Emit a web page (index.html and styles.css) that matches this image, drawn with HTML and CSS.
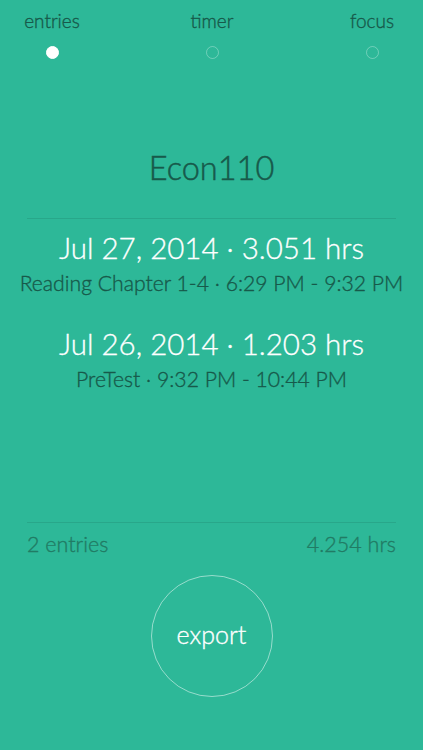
FILE: index.html
```html
<!DOCTYPE html>
<html>
<head>
<meta charset="utf-8">
<link rel="stylesheet" href="styles.css">
</head>
<body>
<div class="screen">
  <nav class="tabs">
    <div class="tab"><span class="tab-label">entries</span><span class="dot dot-active"></span></div>
    <div class="tab"><span class="tab-label">timer</span><span class="dot"></span></div>
    <div class="tab"><span class="tab-label">focus</span><span class="dot"></span></div>
  </nav>
  <h1 class="title">Econ110</h1>
  <div class="rule"></div>
  <div class="entries">
    <div class="entry">
      <div class="entry-main">Jul 27, 2014 · 3.051 hrs</div>
      <div class="entry-sub">Reading Chapter 1-4 · 6:29 PM - 9:32 PM</div>
    </div>
    <div class="entry">
      <div class="entry-main">Jul 26, 2014 · 1.203 hrs</div>
      <div class="entry-sub">PreTest · 9:32 PM - 10:44 PM</div>
    </div>
  </div>
  <div class="rule"></div>
  <div class="summary">
    <span>2 entries</span>
    <span>4.254 hrs</span>
  </div>
  <div class="export-wrap">
    <button class="export">export</button>
  </div>
</div>
</body>
</html>
```
FILE: styles.css
```css
html, body {
  margin: 0;
  padding: 0;
  background: #2db898;
}
.screen {
  width: 423px;
  height: 750px;
  display: flex;
  flex-direction: column;
  font-family: Lato, "Open Sans", sans-serif;
  font-weight: 300;
  color: #17594a;
  -webkit-text-stroke: 0.35px currentColor;
}
.tabs {
  display: flex;
  justify-content: space-between;
  padding: 8px 21px 0 22px;
}
.tab {
  width: 60px;
  display: flex;
  flex-direction: column;
  align-items: center;
  gap: 12px;
}
.tab-label {
  font-size: 19px;
  line-height: 26px;
  color: #17594a;
}
.dot {
  width: 13px;
  height: 13px;
  border-radius: 50%;
  border: 1px solid rgba(255,255,255,0.3);
  box-sizing: border-box;
}
.dot-active {
  background: #fff;
  border-color: #fff;
}
.title {
  margin: 89px 0 0;
  text-align: center;
  font-weight: 300;
  font-size: 32.5px;
  line-height: 40px;
  color: #17594a;
  -webkit-text-stroke: 0.5px currentColor;
}
.rule {
  height: 1px;
  margin: 0 27px;
  background: rgba(0,0,0,0.09);
}
.title + .rule {
  margin-top: 30px;
}
.entries {
  display: flex;
  flex-direction: column;
  gap: 28px;
  padding-top: 11px;
  flex: 1;
}
.entry {
  text-align: center;
  display: flex;
  flex-direction: column;
  gap: 2px;
}
.entry-main {
  font-size: 29.5px;
  line-height: 36px;
  color: #fff;
  -webkit-text-stroke: 0.3px currentColor;
}
.entry-sub {
  font-size: 21.2px;
  line-height: 30px;
  color: #17594a;
  white-space: nowrap;
}
.summary {
  display: flex;
  justify-content: space-between;
  padding: 7px 27px 0;
  font-size: 21.5px;
  line-height: 28px;
  color: #217b64;
}
.export-wrap {
  display: flex;
  justify-content: center;
  padding: 17px 0 53px;
}
.export {
  width: 122px;
  height: 122px;
  border-radius: 50%;
  border: 1.5px solid rgba(255,255,255,0.5);
  background: transparent;
  color: #fff;
  font-family: Lato, "Open Sans", sans-serif;
  font-weight: 300;
  font-size: 25px;
  -webkit-text-stroke: 0.35px currentColor;
  padding: 0 0 4px;
}
```
